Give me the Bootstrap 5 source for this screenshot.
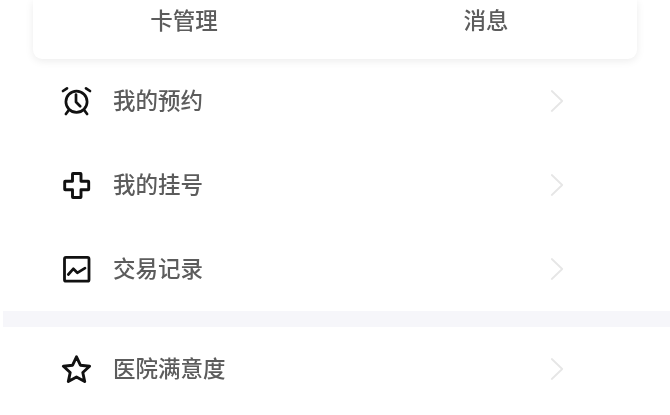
<!DOCTYPE html>
<html lang="zh-CN">
<head>
    <meta charset="UTF-8">
    <meta name="viewport" content="width=device-width, initial-scale=1.0">
    <title>我的</title>
    <link rel="stylesheet" href="https://cdn.jsdelivr.net/npm/bootstrap@5.3.0/dist/css/bootstrap.min.css">
    <style>
        html, body { height: 415px; overflow: hidden; background: #fff; }
        body { font-family: "Liberation Sans", "Noto Sans CJK SC", sans-serif; color: #5c5c5c; }
        .tab-card { margin: 0 33px; height: 59px; border-radius: 0 0 9px 9px; box-shadow: 0 2px 9px rgba(0, 0, 0, .08); background: #fff; }
        .tab-item { font-size: 22.5px; line-height: 44px; height: 44px; font-weight: 500; }
        .menu-row { height: 84px; padding: 0 104px 0 61px; }
        .menu-row svg.menu-icon { width: 31px; height: 31px; flex: none; margin-right: 21px; }
        .menu-text { font-size: 22.5px; line-height: 32px; padding-top: 2px; font-weight: 500; }
        .menu-arrow { width: 16px; height: 24px; flex: none; }
        .band { height: 16px; margin-left: 3px; background: #f6f6fa; }
        .soft { filter: blur(.6px); }
    </style>
</head>
<body>
    <div class="tab-card d-flex">
        <div class="tab-item flex-fill w-50 text-center soft">卡管理</div>
        <div class="tab-item flex-fill w-50 text-center soft">消息</div>
    </div>

    <!-- menu -->
    <div class="menu-row d-flex align-items-center">
        <svg class="menu-icon soft" viewBox="0 0 31 31" fill="none" stroke="#111" stroke-width="2.7" stroke-linecap="round" stroke-linejoin="round">
            <circle cx="15.5" cy="15.7" r="10.6"/>
            <path d="M15 8.500v7.500l4.200 4.200"/>
            <path d="M2 5 6 2.300M29 5 25 2.300M7.500 24.500l-2.600 3.500M23.500 24.500l2.600 3.500"/>
        </svg>
        <span class="menu-text soft flex-grow-1">我的预约</span>
        <svg class="menu-arrow soft" viewBox="0 0 16 24" fill="none" stroke="#e6e6e6" stroke-width="1.8" stroke-linecap="round" stroke-linejoin="round"><path d="M1.800 2 12.200 12 1.800 22"/></svg>
    </div>
    <div class="menu-row d-flex align-items-center">
        <svg class="menu-icon soft" viewBox="0 0 31 31" fill="none" stroke="#111" stroke-width="2.9" stroke-linejoin="round">
            <path d="M12 3.500h7.500a.5.5 0 0 1 .5.5v7.300h7.200a.5.5 0 0 1 .5.5v7.400a.5.5 0 0 1-.5.5H20V27a.5.5 0 0 1-.5.5H12a.5.5 0 0 1-.5-.5v-7.300H4.200a.5.5 0 0 1-.5-.5v-7.400a.5.5 0 0 1 .5-.5h7.300V4a.5.5 0 0 1 .5-.5z"/>
        </svg>
        <span class="menu-text soft flex-grow-1">我的挂号</span>
        <svg class="menu-arrow soft" viewBox="0 0 16 24" fill="none" stroke="#e6e6e6" stroke-width="1.8" stroke-linecap="round" stroke-linejoin="round"><path d="M1.800 2 12.200 12 1.800 22"/></svg>
    </div>
    <div class="menu-row d-flex align-items-center">
        <svg class="menu-icon soft" viewBox="0 0 31 31" fill="none" stroke="#111" stroke-linecap="round" stroke-linejoin="round">
            <rect x="3.500" y="3.400" width="24.500" height="23.800" rx="1.500" stroke-width="2.800"/>
            <path d="M7.300 20.500 12.300 14.800l4 4 7.700-4.600" stroke-width="2.700"/>
        </svg>
        <span class="menu-text soft flex-grow-1">交易记录</span>
        <svg class="menu-arrow soft" viewBox="0 0 16 24" fill="none" stroke="#e6e6e6" stroke-width="1.8" stroke-linecap="round" stroke-linejoin="round"><path d="M1.800 2 12.200 12 1.800 22"/></svg>
    </div>

    <div class="band"></div>

    <div class="menu-row d-flex align-items-center">
        <svg class="menu-icon soft" viewBox="0 0 31 31" fill="none" stroke="#111" stroke-width="2.900" stroke-linejoin="round">
            <path d="M15.500 2.800l3.900 8.400 9.200 1-6.800 6.300 1.900 9.100-8.200-4.600-8.200 4.600 1.900-9.100L2.400 12.200l9.200-1z"/>
        </svg>
        <span class="menu-text soft flex-grow-1">医院满意度</span>
        <svg class="menu-arrow soft" viewBox="0 0 16 24" fill="none" stroke="#e6e6e6" stroke-width="1.8" stroke-linecap="round" stroke-linejoin="round"><path d="M1.800 2 12.200 12 1.800 22"/></svg>
    </div>

    <script src="https://cdn.jsdelivr.net/npm/bootstrap@5.3.0/dist/js/bootstrap.bundle.min.js"></script>
</body>
</html>
